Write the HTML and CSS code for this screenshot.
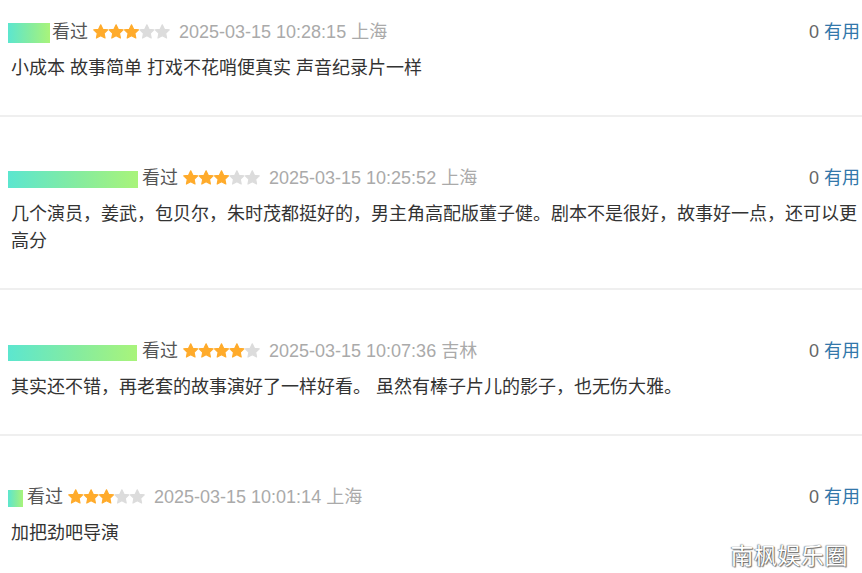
FILE: index.html
```html
<!DOCTYPE html>
<html lang="zh-CN">
<head>
<meta charset="utf-8">
<title>短评</title>
<link rel="stylesheet" href="styles.css">
</head>
<body>
<div class="list">
  <div class="item first">
    <div class="head">
      <div class="meta">
        <span class="name n1"></span>
        <span class="watched">看过</span>
        <span class="stars">
          <svg viewBox="0 0 80 16" width="77" height="15.4"><use href="#s" x="0" class="on"/><use href="#s" x="16" class="on"/><use href="#s" x="32" class="on"/><use href="#s" x="48" class="off"/><use href="#s" x="64" class="off"/></svg>
        </span>
        <span class="time">2025-03-15 10:28:15 上海</span>
      </div>
      <div class="votes"><span class="count">0</span> <span class="useful">有用</span></div>
    </div>
    <p class="comment">小成本 故事简单 打戏不花哨便真实 声音纪录片一样</p>
  </div>

  <div class="item">
    <div class="head">
      <div class="meta">
        <span class="name n2"></span>
        <span class="watched">看过</span>
        <span class="stars">
          <svg viewBox="0 0 80 16" width="77" height="15.4"><use href="#s" x="0" class="on"/><use href="#s" x="16" class="on"/><use href="#s" x="32" class="on"/><use href="#s" x="48" class="off"/><use href="#s" x="64" class="off"/></svg>
        </span>
        <span class="time">2025-03-15 10:25:52 上海</span>
      </div>
      <div class="votes"><span class="count">0</span> <span class="useful">有用</span></div>
    </div>
    <p class="comment">几个演员，姜武，包贝尔，朱时茂都挺好的，男主角高配版董子健。剧本不是很好，故事好一点，还可以更高分</p>
  </div>

  <div class="item">
    <div class="head">
      <div class="meta">
        <span class="name n3"></span>
        <span class="watched">看过</span>
        <span class="stars">
          <svg viewBox="0 0 80 16" width="77" height="15.4"><use href="#s" x="0" class="on"/><use href="#s" x="16" class="on"/><use href="#s" x="32" class="on"/><use href="#s" x="48" class="on"/><use href="#s" x="64" class="off"/></svg>
        </span>
        <span class="time">2025-03-15 10:07:36 吉林</span>
      </div>
      <div class="votes"><span class="count">0</span> <span class="useful">有用</span></div>
    </div>
    <p class="comment">其实还不错，再老套的故事演好了一样好看。 虽然有棒子片儿的影子，也无伤大雅。</p>
  </div>

  <div class="item last">
    <div class="head">
      <div class="meta">
        <span class="name n4"></span>
        <span class="watched">看过</span>
        <span class="stars">
          <svg viewBox="0 0 80 16" width="77" height="15.4"><use href="#s" x="0" class="on"/><use href="#s" x="16" class="on"/><use href="#s" x="32" class="on"/><use href="#s" x="48" class="off"/><use href="#s" x="64" class="off"/></svg>
        </span>
        <span class="time">2025-03-15 10:01:14 上海</span>
      </div>
      <div class="votes"><span class="count">0</span> <span class="useful">有用</span></div>
    </div>
    <p class="comment">加把劲吧导演</p>
  </div>
</div>

<div class="watermark">南枫娱乐圈</div>

<svg class="defs" width="0" height="0" aria-hidden="true">
  <defs>
    <path id="s" d="M8 0.8 L10.23 5.53 L15.3 6.05 L11.5 9.57 L12.5 14.6 L8 12.1 L3.5 14.6 L4.5 9.57 L0.7 6.05 L5.77 5.53 Z"/>
  </defs>
</svg>
</body>
</html>
```

FILE: styles.css
```css
html, body {
  margin: 0;
  padding: 0;
  background: #fff;
}

body {
  font-family: "Liberation Sans", "Noto Sans CJK SC", sans-serif;
  font-size: 18px;
  color: #333;
  position: relative;
  min-height: 573px;
  overflow: hidden;
}

.list {
  display: flex;
  flex-direction: column;
}

.item {
  padding: 49px 2px 33px 8px;
  border-bottom: 2px solid #efefef;
}

.item.first {
  padding-top: 20px;
}

.item.last {
  border-bottom: none;
}

.head {
  display: flex;
  align-items: center;
  justify-content: space-between;
  height: 24px;
  line-height: 24px;
}

.meta {
  display: flex;
  align-items: center;
}

.name {
  display: block;
  background: linear-gradient(90deg, #5ce6cf 0%, #86ec9e 55%, #a9f47a 100%);
  margin-right: 3px;
}

.n1 { width: 42px; height: 20px; margin-top: 2px; margin-right: 2px; }
.n2 { width: 130px; height: 17px; margin-top: 2px; margin-right: 4px; }
.n3 { width: 129px; height: 16px; margin-top: 3px; margin-right: 5px; }
.n4 { width: 15px; height: 17px; margin-top: 2px; margin-right: 4px; }

.watched {
  color: #555;
}

.stars {
  display: flex;
  margin-left: 5px;
  margin-right: 9px;
}

.stars svg {
  display: block;
  overflow: visible;
}

.on { fill: #ffab2b; stroke: #ffab2b; stroke-width: 1.2; stroke-linejoin: round; }
.off { fill: #dcdcdc; stroke: #dcdcdc; stroke-width: 1.2; stroke-linejoin: round; }

.time {
  color: #aaa;
}

.votes {
  white-space: nowrap;
}

.count {
  color: #666;
}

.useful {
  color: #37a;
}

.comment {
  margin: 11px 0 0 3px;
  line-height: 27px;
  color: #333;
}

.defs {
  position: absolute;
  width: 0;
  height: 0;
}

.watermark {
  position: absolute;
  right: 14px;
  bottom: 12px;
  font-family: "Noto Sans CJK SC", sans-serif;
  font-size: 23px;
  line-height: 28px;
  color: #fff;
  letter-spacing: 0.5px;
  text-shadow: 0 0 1px #444, 1px 1px 1px rgba(0, 0, 0, 0.55), -1px 0 1px rgba(0,0,0,0.3);
}
```
